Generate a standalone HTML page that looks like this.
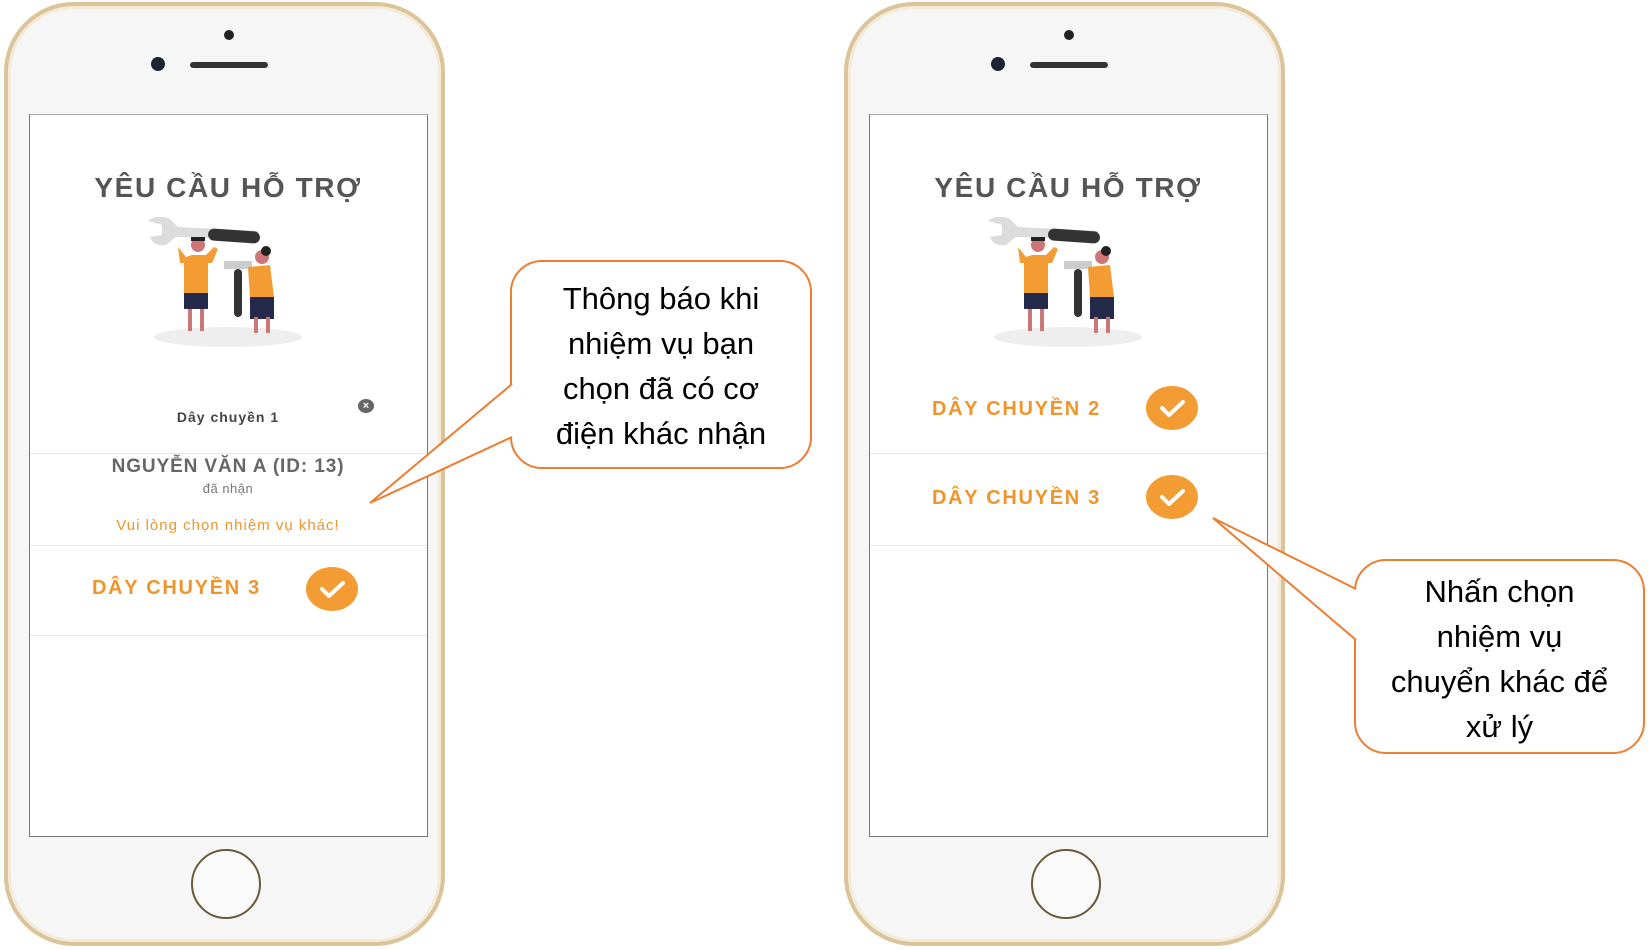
<!DOCTYPE html>
<html><head><meta charset="utf-8"><style>
body{margin:0;width:1649px;height:950px;background:#fff;position:relative;overflow:hidden;font-family:"Liberation Sans",sans-serif}
.ph{position:absolute;top:2px;width:441px;height:944px;border-radius:70px;background:#f6f6f7;border:4px solid #dcc49a;box-shadow:inset 0 0 0 3px #f3ead8;box-sizing:border-box}
.scr{position:absolute;left:25px;top:111px;width:397px;height:721px;background:#fff;border:1px solid #777;border-top-color:#aaa}
.ab{position:absolute;white-space:nowrap}
.c{transform:translateX(-50%)}
.ttl{font-weight:bold;font-size:28px;color:#555;letter-spacing:1.6px}
.line{position:absolute;left:0;width:397px;height:1px;background:#e6e6e6}
.or{color:#f0952a;font-weight:bold;font-size:20px;letter-spacing:1.7px}
.chk{position:absolute;width:52px;height:44px;border-radius:50%;background:#f39c33}
.call{position:absolute;border:2px solid #ed7d31;border-radius:32px;background:#fff;box-sizing:border-box;text-align:center;font-size:31px;line-height:45px;color:#000;font-family:"Liberation Sans","DejaVu Sans",sans-serif}
.hb{position:absolute;left:183px;top:843px;width:70px;height:70px;border-radius:50%;border:2px solid #6b5a3a;box-sizing:border-box;background:#fafafa}
</style></head><body>

<div class="ph" style="left:4px">
 <div class="ab" style="left:216px;top:24px;width:10px;height:10px;border-radius:50%;background:#222"></div>
 <div class="ab" style="left:143px;top:51px;width:14px;height:14px;border-radius:50%;background:#1d2433"></div>
 <div class="ab" style="left:182px;top:56px;width:78px;height:6px;border-radius:3px;background:#333"></div>
 <div class="hb"></div>
</div>
<div class="ph" style="left:844px">
 <div class="ab" style="left:216px;top:24px;width:10px;height:10px;border-radius:50%;background:#222"></div>
 <div class="ab" style="left:143px;top:51px;width:14px;height:14px;border-radius:50%;background:#1d2433"></div>
 <div class="ab" style="left:182px;top:56px;width:78px;height:6px;border-radius:3px;background:#333"></div>
 <div class="hb"></div>
</div>

<svg width="0" height="0" style="position:absolute"><defs>
<g id="ill">
 <ellipse cx="80" cy="120" rx="74" ry="10" fill="#eee"/>
 <path d="M0 4 Q10 -4 22 2 L30 10 L110 14 L112 22 L28 20 L18 28 Q6 30 2 20 L14 18 L14 8 Z" fill="#dcdcdc"/>
 <rect x="60" y="13" width="52" height="12" rx="6" fill="#333" transform="rotate(4 86 19)"/>
 <path d="M30 30 L38 40 L44 38 L58 38 L66 30 L70 32 L64 46 L60 46 L60 76 L36 76 L36 46 L32 46 Z" fill="#f39c33"/>
 <circle cx="50" cy="28" r="7" fill="#c77"/><path d="M43 24 h14 v-4 h-14z" fill="#222"/>
 <rect x="36" y="76" width="24" height="16" fill="#262a4a"/>
 <rect x="40" y="92" width="4" height="22" fill="#c77"/><rect x="52" y="92" width="4" height="22" fill="#c77"/>
 <rect x="76" y="44" width="28" height="8" fill="#ccc"/><rect x="86" y="52" width="8" height="48" rx="4" fill="#333"/>
 <path d="M100 50 L122 48 L126 80 L102 80 Z" fill="#f39c33"/>
 <circle cx="114" cy="40" r="7" fill="#c77"/><circle cx="118" cy="34" r="5" fill="#222"/>
 <rect x="102" y="80" width="24" height="22" fill="#262a4a"/>
 <rect x="106" y="100" width="4" height="16" fill="#c77"/><rect x="118" y="100" width="4" height="16" fill="#c77"/>
</g>
<g id="ck"><path d="M-10 0 L-3 7 L11 -6" fill="none" stroke="#fff" stroke-width="4" stroke-linecap="round" stroke-linejoin="round"/></g>
</defs></svg>

<div class="scr" style="left:29px;top:114px">
 <div class="ab c ttl" style="left:198px;top:57px">YÊU CẦU HỖ TRỢ</div>
 <svg class="ab" style="left:118px;top:102px" width="160" height="134"><use href="#ill"/></svg>
 <div class="ab c" style="left:198px;top:294px;font-size:14px;color:#444;font-weight:bold;letter-spacing:1px">Dây chuyền 1</div>
 <div class="ab" style="left:328px;top:284px;width:16px;height:14px;border-radius:50%;background:#666;color:#fff;font-size:11px;line-height:14px;text-align:center;font-weight:bold">×</div>
 <div class="line" style="top:338px"></div>
 <div class="ab c" style="left:198px;top:341px;font-size:19px;color:#666;font-weight:bold;letter-spacing:0.9px">NGUYỄN VĂN A (ID: 13)</div>
 <div class="ab c" style="left:198px;top:366px;font-size:13px;color:#777;letter-spacing:0.5px">đã nhận</div>
 <div class="ab c" style="left:198px;top:402px;font-size:15px;color:#f0952a;letter-spacing:1px">Vui lòng chọn nhiệm vụ khác!</div>
 <div class="line" style="top:430px"></div>
 <div class="ab or" style="left:62px;top:462px">DÂY CHUYỀN 3</div>
 <div class="chk" style="left:276px;top:452px"><svg width="52" height="44"><use href="#ck" x="26" y="22"/></svg></div>
 <div class="line" style="top:520px"></div>
</div>

<div class="scr" style="left:869px;top:114px">
 <div class="ab c ttl" style="left:198px;top:57px">YÊU CẦU HỖ TRỢ</div>
 <svg class="ab" style="left:118px;top:102px" width="160" height="134"><use href="#ill"/></svg>
 <div class="ab or" style="left:62px;top:283px">DÂY CHUYỀN 2</div>
 <div class="chk" style="left:276px;top:271px"><svg width="52" height="44"><use href="#ck" x="26" y="22"/></svg></div>
 <div class="line" style="top:338px"></div>
 <div class="ab or" style="left:62px;top:372px">DÂY CHUYỀN 3</div>
 <div class="chk" style="left:276px;top:360px"><svg width="52" height="44"><use href="#ck" x="26" y="22"/></svg></div>
 <div class="line" style="top:430px"></div>
</div>

<div class="call" style="left:510px;top:260px;width:302px;height:209px;padding-top:14px">Thông báo khi<br>nhiệm vụ bạn<br>chọn đã có cơ<br>điện khác nhận</div>
<div class="call" style="left:1354px;top:559px;width:291px;height:195px;padding-top:8px">Nhấn chọn<br>nhiệm vụ<br>chuyển khác để<br>xử lý</div>
<svg class="ab" style="left:0;top:0;position:absolute" width="1649" height="950">
 <path d="M512 384 L370 503 L512 437" fill="#fff" stroke="#ed7d31" stroke-width="2"/>
 <path d="M1356 589 L1213 518 L1356 640" fill="#fff" stroke="#ed7d31" stroke-width="2"/>
</svg>
</body></html>
